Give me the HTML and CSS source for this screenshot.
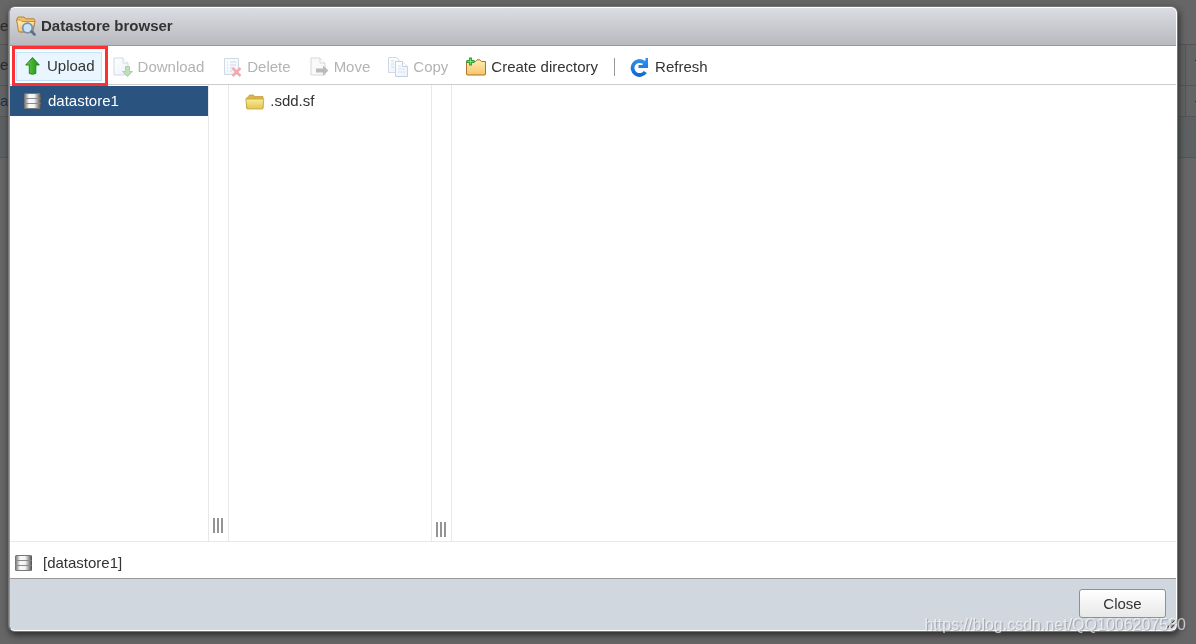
FILE: index.html
```html
<!DOCTYPE html>
<html lang="en">
<head>
<meta charset="utf-8">
<title>Datastore browser</title>
<link rel="stylesheet" href="styles.css">
</head>
<body>
<svg class="defs" aria-hidden="true">
  <defs>
    <linearGradient id="metal" x1="0" x2="1" y1="0" y2="0">
      <stop offset="0" stop-color="#666"/><stop offset=".3" stop-color="#fafafa"/><stop offset=".6" stop-color="#f2f2f2"/><stop offset="1" stop-color="#4c4c4c"/>
    </linearGradient>
    <linearGradient id="gold" x1="0" x2="0" y1="0" y2="1">
      <stop offset="0" stop-color="#ffedb5"/><stop offset="1" stop-color="#f7c468"/>
    </linearGradient>
    <linearGradient id="yellow" x1="0" x2="0" y1="0" y2="1">
      <stop offset="0" stop-color="#f9ec94"/><stop offset="1" stop-color="#e2c453"/>
    </linearGradient>
    <linearGradient id="green" x1="0" x2="1" y1="0" y2="0">
      <stop offset="0" stop-color="#65cf46"/><stop offset="1" stop-color="#1c8f16"/>
    </linearGradient>
    <linearGradient id="blue" gradientUnits="userSpaceOnUse" x1="0" x2="0" y1="0" y2="20">
      <stop offset="0" stop-color="#3296f5"/><stop offset="1" stop-color="#1265cd"/>
    </linearGradient>
    <linearGradient id="paper" x1="0" x2="1" y1="0" y2="1">
      <stop offset="0" stop-color="#fff"/><stop offset="1" stop-color="#cfe0f2"/>
    </linearGradient>
    <symbol id="disk" viewBox="0 0 20 20">
      <path d="M1 3.500Q1 2 2.500 2h14Q18 2 18 3.500v13q0 1.500-1.500 1.500h-14Q1 18 1 16.500z" fill="url(#metal)"/>
      <path d="M2 2.500h15M2 17.500h15" stroke="#777"/>
      <path d="M1.500 7.500h16M1.500 12.500h16" stroke="#8a8a8a"/>
    </symbol>
  </defs>
</svg>

<div class="page">
  <div class="page-row page-row-top"><span>ev</span></div>
  <div class="page-row page-row-head"><span>e</span><span class="page-cell"></span></div>
  <div class="page-row page-row-data"><span>a</span><span class="page-cell"></span></div>
  <div class="page-row page-row-foot"></div>
</div>

<div class="overlay">
  <section class="dialog" role="dialog" aria-labelledby="dialog-title">
    <header class="titlebar">
      <svg class="icon" viewBox="0 0 20 20">
        <path d="M2.500 14 .7 3.500 2 1h6l1.500 1.800H18l1 2-2 11.200H4z" fill="#f0c06a" stroke="#b98234"/>
        <path d="M.8 4 2.500 15.800h14L18.800 5.500H6L4.500 4z" fill="url(#gold)" stroke="#b98234" stroke-width=".8"/>
        <circle cx="11.500" cy="12" r="4.800" fill="#c7e3f7" stroke="#7792ad" stroke-width="1.800"/>
        <path d="m15.500 15.500 3 3" stroke="#5c7189" stroke-width="2.600" stroke-linecap="round"/>
      </svg>
      <h1 id="dialog-title">Datastore browser</h1>
    </header>

    <div class="toolbar" role="toolbar">
      <span class="marked">
        <button class="tool tool-active" type="button">
          <svg class="icon" viewBox="0 0 20 20"><path d="m9.500 1.500 6.800 7.500h-3.500v8.500q-3.200 1.500-6.500 0V9H2.700z" fill="url(#green)" stroke="#258b1a" stroke-linejoin="round"/></svg>
          Upload
        </button>
      </span>
      <button class="tool" type="button" disabled>
        <svg class="icon" viewBox="0 0 20 20"><path d="M1 1h9l5 5v12H1z" fill="url(#paper)" stroke="#86a3c4"/><path d="M10 1v5h5" fill="#fff" stroke="#86a3c4"/><path d="M12.500 9.500h4v5h3L14.500 19.500 9.500 14.500h3z" fill="#57b345" stroke="#388b2e" stroke-linejoin="round"/></svg>
        Download
      </button>
      <button class="tool" type="button" disabled>
        <svg class="icon" viewBox="0 0 20 20"><path d="M2.500 1.500h14v16h-14z" fill="url(#paper)" stroke="#86a3c4"/><path d="M5 5h1M8 5h6M5 8h1M8 8h6M5 11h1M8 11h4M5 14h1M8 14h2" stroke="#86a3c4"/><path d="m10.500 11 8 8m0-8-8 8" stroke="#e62d2d" stroke-width="2.500"/></svg>
        Delete
      </button>
      <button class="tool" type="button" disabled>
        <svg class="icon" viewBox="0 0 20 20"><path d="M2 1h9l5 5v12H2z" fill="#f2f2f2" stroke="#9a9a9a"/><path d="M11 1v5h5" fill="#fff" stroke="#9a9a9a"/><path d="M7 11.500h7V8.500l5.500 5-5.500 5v-3H7z" fill="#555"/></svg>
        Move
      </button>
      <button class="tool" type="button" disabled>
        <svg class="icon" viewBox="0 0 20 20"><path d="M.5.500h8l3 3v12H.5z" fill="url(#paper)" stroke="#86a3c4"/><path d="M3 4h3M3 7h3M3 10h3" stroke="#86a3c4"/><path d="M7.500 4.500h7l5 5v10h-12z" fill="url(#paper)" stroke="#6a8fbd"/><path d="M14.500 4.500v5h5" fill="#fff" stroke="#6a8fbd"/><path d="M10 9h3M10 12h7M10 15h7" stroke="#9db8d6"/></svg>
        Copy
      </button>
      <button class="tool" type="button">
        <svg class="icon" viewBox="0 0 20 20"><path d="M.5 17V4.500h9L11 2.800h3L15.500 4.500h4V17q0 1-1 1h-17q-1 0-1-1z" fill="url(#gold)" stroke="#a8752b"/><path d="M4.500.500v8M.5 4.500h8" stroke="#2d9d36" stroke-width="3"/><path d="M4.500 1.500v6M1.500 4.500h6" stroke="#6ee066" stroke-width="1.200"/></svg>
        Create directory
      </button>
      <span class="separator"></span>
      <button class="tool" type="button">
        <svg class="icon" viewBox="0 0 20 20"><path d="M13.500 5.200A7 7 0 1 0 15.300 15" fill="none" stroke="url(#blue)" stroke-width="3.800"/><path d="M18 1v10H8.500V8h4l1-4L15.500 3.500V1z" fill="url(#blue)"/></svg>
        Refresh
      </button>
    </div>

    <div class="browser">
      <nav class="stores">
        <a class="store" href="#datastore1"><svg class="icon"><use href="#disk"/></svg>datastore1</a>
      </nav>
      <div class="splitter"><span class="grip"></span></div>
      <div class="folders">
        <a class="folder" href="#sdd"><svg class="icon" viewBox="0 0 20 20"><path d="M1.500 17V7l2-1.500L4.500 4h4l1 1.500h8.500V17z" fill="#d8b54e" stroke="#c49e3b" stroke-width=".8"/><path d="M.7 8h18.100l-1 10H2z" fill="url(#yellow)" stroke="#c6a340" stroke-width=".8"/></svg>.sdd.sf</a>
      </div>
      <div class="splitter splitter-low"><span class="grip"></span></div>
      <div class="details"></div>
    </div>

    <div class="path"><svg class="icon"><use href="#disk"/></svg><span>[datastore1]</span></div>

    <footer class="footer">
      <button class="close" type="button">Close</button>
      <svg class="resize" viewBox="0 0 8 8" aria-hidden="true"><path d="m0 8 8-8M4 8l4-4" stroke="#444" stroke-width="1.200"/></svg>
    </footer>
  </section>
</div>
<div class="watermark">https://blog.csdn.net/QQ1006207580</div>
</body>
</html>
```
FILE: styles.css
```css
* {
  box-sizing: border-box;
}

body {
  margin: 0;
  background: #666;
  color: #333;
  font: 15px/18px "Liberation Sans", Arial, sans-serif;
}

.defs {
  position: absolute;
  width: 0;
  height: 0;
}

.page {
  color: #2b2b2b;
}

.page-row {
  display: flex;
  justify-content: space-between;
  align-items: center;
  border-bottom: 1px solid #555;
}

.page-row-top {
  height: 45px;
  padding-top: 8px;
}

.page-row-head {
  height: 41px;
  background: #626466;
}

.page-row-data {
  height: 31px;
  background: #626466;
  color: #1e3147;
}

.page-row-foot {
  height: 41px;
  background: #5e6163;
}

.page-cell {
  align-self: stretch;
  width: 11px;
  border-left: 1px solid #555;
  background: linear-gradient(#2b2b2b, #2b2b2b) right 15px / 1px 1px no-repeat;
}

.overlay {
  position: fixed;
  inset: 0;
  display: flex;
  padding: 7px 19px 13px 9px;
}

.dialog {
  display: flex;
  flex: 1;
  flex-direction: column;
  overflow: hidden;
  border: 1px solid #fff;
  border-left-color: #999;
  border-radius: 6px;
  background: #fff;
  box-shadow: 0 0 0 1px #777, 1px 3px 7px 1px #2a2a2a;
}

.icon {
  flex: none;
  width: 20px;
  height: 20px;
}

.titlebar {
  display: flex;
  align-items: center;
  gap: 5px;
  height: 38px;
  padding: 0 6px 2px;
  border-bottom: 1px solid #999;
  background: linear-gradient(#dcdde2, #b8b9be);
}

.titlebar h1 {
  margin: 0;
  font-size: 15px;
}

.toolbar {
  display: flex;
  align-items: center;
  gap: 4px;
  height: 39px;
  border-bottom: 1px solid #ccc;
  padding-top: 4px;
}

.marked {
  position: relative;
  margin: -3px -6px 0 2px;
  padding: 3px 3px 2px 1px;
  border: 3px solid #fb3135;
}

.tool {
  display: flex;
  align-items: center;
  gap: 5px;
  height: 29px;
  padding: 0 6px;
  border: 1px solid transparent;
  background: none;
  color: #333;
  font: inherit;
  white-space: nowrap;
}

.tool-active {
  gap: 4px;
  border-color: #bfe4fb;
  background: #e9f6ff;
}

.tool:disabled {
  color: #b3b3b3;
}

.tool:disabled .icon {
  opacity: 0.4;
}

.separator {
  width: 2px;
  height: 18px;
  margin: 0 4px;
  border-right: 1px solid #999;
}

.browser {
  display: flex;
  flex: 1;
  min-height: 0;
  border-bottom: 1px solid #e8e8e8;
}

.stores {
  width: 17%;
  padding-top: 1px;
}

.store,
.folder {
  display: flex;
  align-items: center;
  gap: 5px;
  height: 30px;
  color: #333;
  text-decoration: none;
}

.store {
  padding-left: 13px;
  background: #2a547f;
  color: #fff;
}

.folders {
  width: 202px;
  padding: 1px 0 0 16px;
}

.splitter {
  display: flex;
  align-items: flex-end;
  width: 21px;
  padding: 0 0 8px 4px;
  border: solid #e8e8e8;
  border-width: 0 1px;
}

.splitter-low {
  padding-bottom: 4px;
}

.grip {
  width: 10px;
  height: 15px;
  background: repeating-linear-gradient(90deg, #949494 0 2px, transparent 2px 4px);
}

.details {
  flex: 1;
}

.path {
  display: flex;
  align-items: center;
  gap: 9px;
  height: 37px;
  padding: 5px 4px 0;
  border-bottom: 1px solid #999;
}

.footer {
  display: flex;
  align-items: center;
  justify-content: flex-end;
  height: 51px;
  padding: 0 10px 2px 0;
  background: #d0d7df;
}

.close {
  width: 87px;
  height: 29px;
  border: 1px solid #919191;
  border-radius: 3px;
  background: linear-gradient(#fff, #e8e8e8);
  color: #333;
  font: inherit;
}

.resize {
  align-self: flex-end;
  width: 8px;
  height: 8px;
  margin: 0 -9px 0 1px;
}

.watermark {
  position: fixed;
  right: 10px;
  bottom: 10px;
  color: rgba(255, 255, 255, 0.65);
  font-size: 16px;
  text-shadow: 1px 1px 1px rgba(80, 80, 80, 0.4);
}
```
